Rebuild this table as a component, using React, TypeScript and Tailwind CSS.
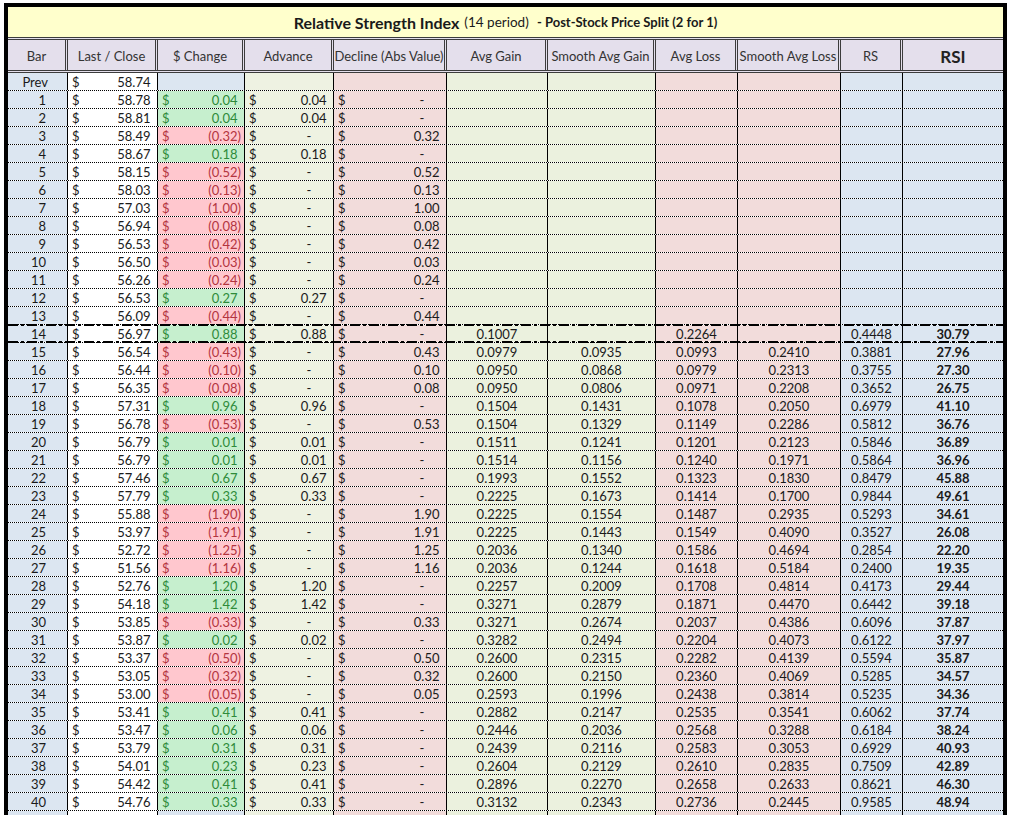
import React from 'react';

type Row = {
  bar: string;
  close?: string;
  chg?: string; // signed string like '0.04' or '-0.32'
  avgGain?: string;
  smGain?: string;
  avgLoss?: string;
  smLoss?: string;
  rs?: string;
  rsi?: string;
};

const W = [
  'w-[60px]',
  'w-[90px]',
  'w-[87px]',
  'w-[89px]',
  'w-[113px]',
  'w-[101px]',
  'w-[108px]',
  'w-[82px]',
  'w-[103px]',
  'w-[62px]',
  'w-[100px]',
];

const HEADERS = [
  'Bar',
  'Last / Close',
  '$ Change',
  'Advance',
  'Decline (Abs Value)',
  'Avg Gain',
  'Smooth Avg Gain',
  'Avg Loss',
  'Smooth Avg Loss',
  'RS',
  'RSI',
];

// bar, close, change, avgGain, smoothGain, avgLoss, smoothLoss, rs, rsi
const RAW: string[] = [
  'Prev|58.74',
  '1|58.78|0.04',
  '2|58.81|0.04',
  '3|58.49|-0.32',
  '4|58.67|0.18',
  '5|58.15|-0.52',
  '6|58.03|-0.13',
  '7|57.03|-1.00',
  '8|56.94|-0.08',
  '9|56.53|-0.42',
  '10|56.50|-0.03',
  '11|56.26|-0.24',
  '12|56.53|0.27',
  '13|56.09|-0.44',
  '14|56.97|0.88|0.1007||0.2264||0.4448|30.79',
  '15|56.54|-0.43|0.0979|0.0935|0.0993|0.2410|0.3881|27.96',
  '16|56.44|-0.10|0.0950|0.0868|0.0979|0.2313|0.3755|27.30',
  '17|56.35|-0.08|0.0950|0.0806|0.0971|0.2208|0.3652|26.75',
  '18|57.31|0.96|0.1504|0.1431|0.1078|0.2050|0.6979|41.10',
  '19|56.78|-0.53|0.1504|0.1329|0.1149|0.2286|0.5812|36.76',
  '20|56.79|0.01|0.1511|0.1241|0.1201|0.2123|0.5846|36.89',
  '21|56.79|0.01|0.1514|0.1156|0.1240|0.1971|0.5864|36.96',
  '22|57.46|0.67|0.1993|0.1552|0.1323|0.1830|0.8479|45.88',
  '23|57.79|0.33|0.2225|0.1673|0.1414|0.1700|0.9844|49.61',
  '24|55.88|-1.90|0.2225|0.1554|0.1487|0.2935|0.5293|34.61',
  '25|53.97|-1.91|0.2225|0.1443|0.1549|0.4090|0.3527|26.08',
  '26|52.72|-1.25|0.2036|0.1340|0.1586|0.4694|0.2854|22.20',
  '27|51.56|-1.16|0.2036|0.1244|0.1618|0.5184|0.2400|19.35',
  '28|52.76|1.20|0.2257|0.2009|0.1708|0.4814|0.4173|29.44',
  '29|54.18|1.42|0.3271|0.2879|0.1871|0.4470|0.6442|39.18',
  '30|53.85|-0.33|0.3271|0.2674|0.2037|0.4386|0.6096|37.87',
  '31|53.87|0.02|0.3282|0.2494|0.2204|0.4073|0.6122|37.97',
  '32|53.37|-0.50|0.2600|0.2315|0.2282|0.4139|0.5594|35.87',
  '33|53.05|-0.32|0.2600|0.2150|0.2360|0.4069|0.5285|34.57',
  '34|53.00|-0.05|0.2593|0.1996|0.2438|0.3814|0.5235|34.36',
  '35|53.41|0.41|0.2882|0.2147|0.2535|0.3541|0.6062|37.74',
  '36|53.47|0.06|0.2446|0.2036|0.2568|0.3288|0.6184|38.24',
  '37|53.79|0.31|0.2439|0.2116|0.2583|0.3053|0.6929|40.93',
  '38|54.01|0.23|0.2604|0.2129|0.2610|0.2835|0.7509|42.89',
  '39|54.42|0.41|0.2896|0.2270|0.2658|0.2633|0.8621|46.30',
  '40|54.76|0.33|0.3132|0.2343|0.2736|0.2445|0.9585|48.94',
];

const ROWS: Row[] = RAW.map((line) => {
  const [bar, close, chg, avgGain, smGain, avgLoss, smLoss, rs, rsi] = line.split('|');
  return { bar, close, chg, avgGain, smGain, avgLoss, smLoss, rs, rsi };
});

// Excel accounting format: "$" pinned left, value right, room kept for ")"
function Money({ value, className = '' }: { value?: string; className?: string }) {
  if (!value) return null;
  let body: React.ReactNode;
  if (value === '-') {
    body = (
      <>
        -<span className="invisible">00)</span>
      </>
    );
  } else if (value.startsWith('-')) {
    body = `(${value.slice(1)})`;
  } else {
    body = (
      <>
        {value}
        <span className="invisible">)</span>
      </>
    );
  }
  return (
    <div className={`flex w-full justify-between pl-[4px] pr-[3px] ${className}`}>
      <span>$</span>
      <span>{body}</span>
    </div>
  );
}

const DASH_DOT =
  'pointer-events-none absolute left-0 right-0 h-[2px] bg-[image:repeating-linear-gradient(90deg,#000_0_10px,transparent_10px_13px,#000_13px_16px,transparent_16px_19px)]';

function DataRow({ row, last }: { row: Row; last?: boolean }) {
  const isPrev = row.bar === 'Prev';
  const neg = row.chg?.startsWith('-');
  const chgBg = !row.chg ? 'bg-[#dce6f1]' : neg ? 'bg-[#ffc7ce]' : 'bg-[#c6efce]';
  const chgText = neg ? 'text-[#b3353f]' : 'text-[#2e8b3a]';
  const adv = row.chg ? (neg ? '-' : row.chg) : undefined;
  const dec = row.chg ? (neg ? row.chg.slice(1) : '-') : undefined;
  const special = row.bar === '14';

  const cell = 'flex h-full shrink-0 items-center pt-[2px] border-r border-black';

  return (
    <div
      className={`flex h-[18px] border-b border-dotted border-black ${special ? 'relative' : ''} ${
        last ? 'border-b-0' : ''
      }`}
    >
      <div className={`${cell} ${W[0]} justify-end bg-[#dce6f1] ${isPrev ? 'pr-[19px]' : 'pr-[21px]'}`}>
        {row.bar}
      </div>
      <div className={`${cell} ${W[1]} bg-white`}>
        <Money value={row.close} />
      </div>
      <div className={`${cell} ${W[2]} ${chgBg}`}>
        <Money value={row.chg} className={chgText} />
      </div>
      <div className={`${cell} ${W[3]} bg-[#eef2e2]`}>
        <Money value={adv} />
      </div>
      <div className={`${cell} ${W[4]} bg-[#f2dcdb]`}>
        <Money value={dec} />
      </div>
      <div className={`${cell} ${W[5]} justify-center bg-[#ebf1de]`}>{row.avgGain}</div>
      <div className={`${cell} ${W[6]} justify-center bg-[#ebf1de]`}>{row.smGain}</div>
      <div className={`${cell} ${W[7]} justify-center bg-[#f2dcdb]`}>{row.avgLoss}</div>
      <div className={`${cell} ${W[8]} justify-center bg-[#f2dcdb]`}>{row.smLoss}</div>
      <div className={`${cell} ${W[9]} justify-center bg-[#dce6f1]`}>{row.rs}</div>
      <div className={`flex h-full shrink-0 items-center pt-[2px] ${W[10]} justify-center bg-[#dce6f1] font-bold`}>
        {row.rsi}
      </div>

      {/* medium dash-dot borders around the first full RSI bar */}
      {special && (
        <>
          <div className={`${DASH_DOT} -top-[1px]`} />
          <div className={`${DASH_DOT} -bottom-[1px]`} />
        </>
      )}
    </div>
  );
}

export default function App() {
  return (
    <div className="h-[815px] overflow-hidden bg-white pl-1 pt-[3px] font-['Lato',sans-serif] text-[13px] leading-none text-[#1a1a1a]">
      <div className="w-[1003px] border-4 border-b-0 border-black">
        {/* Title */}
        <div className="flex h-[30px] items-center justify-center gap-[5px] bg-[#ffffcc] pt-[1px]">
          <span className="text-[16px] font-bold">Relative Strength Index</span>
          <span className="text-[13.5px]">(14 period)</span>
          <span className="text-[13px] font-bold">&nbsp;- Post-Stock Price Split (2 for 1)</span>
        </div>

        {/* Column headers */}
        <div className="flex h-[36px] border-y-[3px] border-double border-[#3c3c3c] bg-[#e4dfec] text-[#333]">
          {HEADERS.map((h, i) => (
            <div
              key={h}
              className={`flex h-full shrink-0 items-center justify-center pt-[2px] ${W[i]} ${
                i < HEADERS.length - 1 ? 'border-r-[3px] border-double border-[#3c3c3c]' : ''
              } ${h === 'RSI' ? 'text-[17px] font-bold text-[#222]' : ''}`}
            >
              {h}
            </div>
          ))}
        </div>

        {/* Data */}
        {ROWS.map((r) => (
          <DataRow key={r.bar} row={r} />
        ))}
        <DataRow row={{ bar: '' }} last />
      </div>
    </div>
  );
}
